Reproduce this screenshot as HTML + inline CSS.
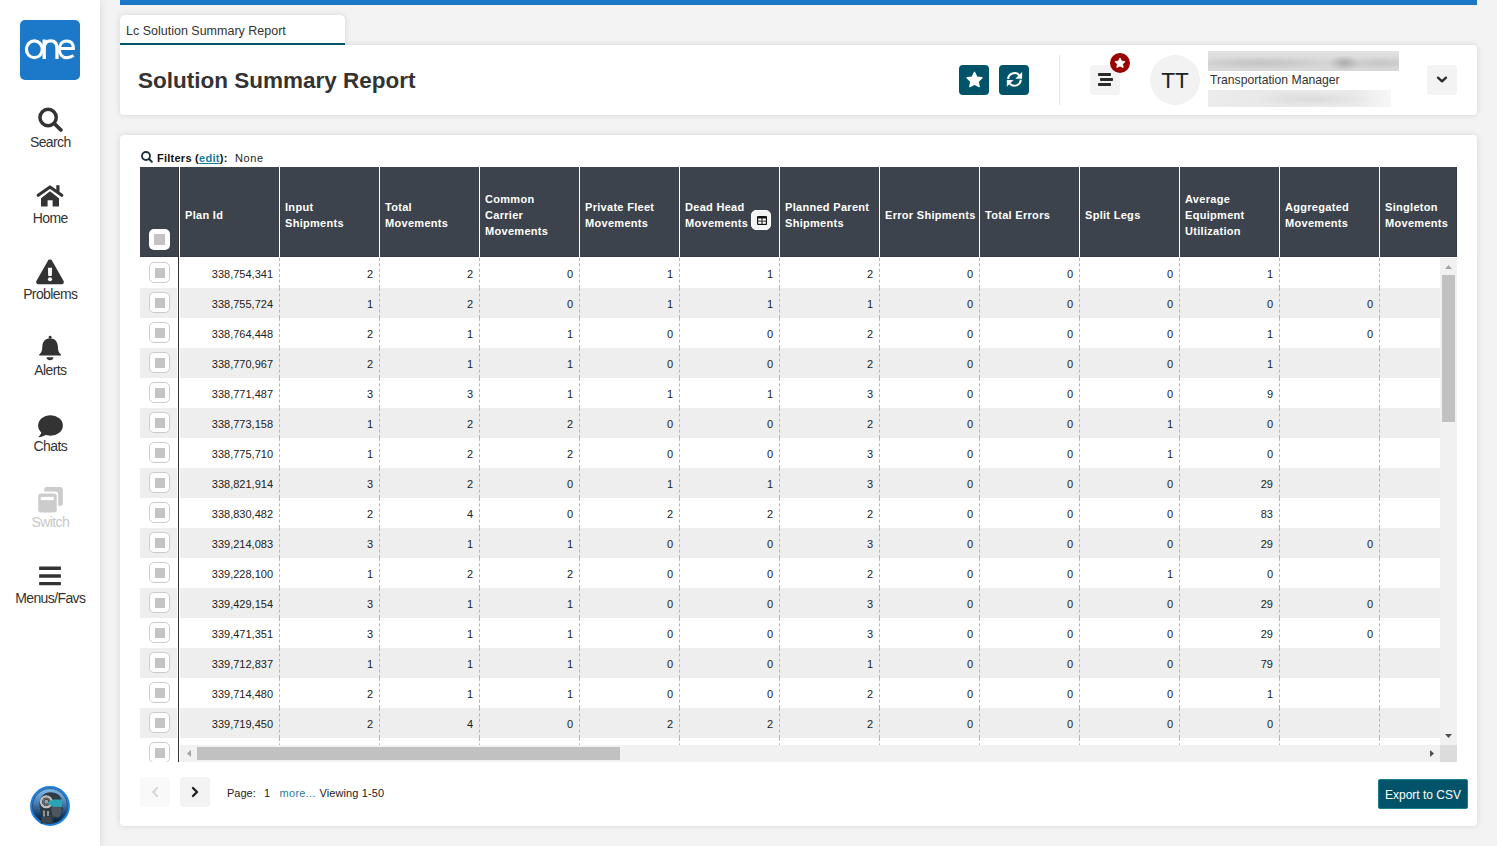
<!DOCTYPE html><html><head><meta charset="utf-8"><style>
*{box-sizing:border-box;margin:0;padding:0}
html,body{width:1497px;height:846px;overflow:hidden;background:#f3f3f3;font-family:"Liberation Sans",sans-serif;color:#222}
.abs{position:absolute}
#side{position:absolute;left:0;top:0;width:100px;height:846px;background:#fff;box-shadow:0 0 8px rgba(0,0,0,.13)}
.logo{position:absolute;left:20px;top:20px;width:60px;height:60px;background:#1c78c8;border-radius:5px;overflow:hidden}
.logo span{position:absolute;left:0;top:7px;width:60px;text-align:center;color:#fff;font-size:37px;line-height:40px;letter-spacing:-4px;text-indent:-4px}
.nav{position:absolute;left:0;width:100px;text-align:center;font-size:13.5px;color:#333}
.nav svg{position:absolute}
.nav .lbl{position:absolute;left:0;width:100px;text-align:center;line-height:16px}
#bluebar{position:absolute;left:120px;top:0;width:1357px;height:5px;background:#1b78c8}
#tab{position:absolute;left:120px;top:15px;width:225px;height:30px;background:#fff;border-radius:5px 5px 0 0;border-bottom:2px solid #005368;box-shadow:0 0 6px rgba(0,0,0,.13);clip-path:inset(-10px -10px 0 -10px)}
#tab span{position:absolute;left:6px;top:8px;font-size:12.5px;color:#333;line-height:16px;white-space:nowrap}
#hdr{position:absolute;left:120px;top:45px;width:1357px;height:70px;background:#fff;border-radius:0 4px 4px 4px;box-shadow:0 0 6px rgba(0,0,0,.13)}
#main{position:absolute;left:120px;top:135px;width:1357px;height:691px;background:#fff;border-radius:4px;box-shadow:0 0 6px rgba(0,0,0,.13)}
.title{position:absolute;left:138px;top:68px;font-size:22.5px;font-weight:bold;color:#333;white-space:nowrap;line-height:26px}
.tbtn{position:absolute;top:65px;width:30px;height:30px;border-radius:4px;background:#005368}
.gbtn{position:absolute;width:30px;height:30px;border-radius:4px;background:#f3f3f3}
#thead{position:absolute;left:140px;top:167px;width:1317px;height:90px;background:#3d434c;overflow:hidden}
.th{position:absolute;top:0;height:90px;color:#fff;font-weight:bold;font-size:11px;line-height:16px;display:flex;align-items:center;padding-left:5px;padding-top:6px;letter-spacing:.3px;border-left:1px solid #fff}
.cell{position:absolute;height:30px;line-height:32px;font-size:11px;color:#222;text-align:right;padding-right:6px;border-right:1px dashed #b5b5b5}
.row{position:absolute;left:180px;width:1260px;height:30px}
.cb{position:absolute;width:21px;height:21px;border:1px solid #ccc;border-radius:5px;background:#fff}
.cb::after{content:"";position:absolute;left:4.5px;top:4.5px;width:10.5px;height:10.5px;background:#c4c4c4}
</style></head><body>
<div id="side">
<div class="logo"><svg class="abs" style="left:0;top:0" width="60" height="60" viewBox="0 0 60 60"><ellipse cx="14.35" cy="29.3" rx="7.95" ry="8.4" fill="none" stroke="#fff" stroke-width="3.2"/><path d="M24.2 19.6 V38.9 M24.2 28.5 C24.2 23.2 27 20.9 30.6 20.9 C34.6 20.9 37 23.2 37 28.5 V38.9" fill="none" stroke="#fff" stroke-width="3.3"/><path d="M39.6 28.6 H53.4 C53.4 23.8 51 20.9 46.6 20.9 C42.1 20.9 39.4 24.5 39.4 29.3 C39.4 34.5 42.3 37.7 46.8 37.7 C49.6 37.7 51.6 37 53.6 35.6" fill="none" stroke="#fff" stroke-width="3"/></svg></div>
<svg class="abs" style="left:0;top:0" width="100" height="620" viewBox="0 0 100 620">
<circle cx="48.1" cy="117.5" r="8.15" fill="none" stroke="#333" stroke-width="3.5"/>
<line x1="54.8" y1="124" x2="60.9" y2="130" stroke="#333" stroke-width="3.8" stroke-linecap="round"/>
<polyline points="38.2,195.3 50,186.9 61.8,195.3" fill="none" stroke="#333" stroke-width="3.1" stroke-linecap="round" stroke-linejoin="round"/>
<rect x="56.3" y="185.2" width="3.2" height="7" fill="#333"/>
<path d="M41 198.2 L50 191.2 L59 198.2 V206.6 H52.6 V200.2 H47.6 V206.6 H41 Z" fill="#333"/>
<path d="M50 259.6 C51 259.6 51.7 260.1 52.2 260.9 L63.6 281 C64.3 282.4 63.5 284.2 61.8 284.2 H38.2 C36.5 284.2 35.7 282.4 36.4 281 L47.8 260.9 C48.3 260.1 49 259.6 50 259.6 Z" fill="#333"/>
<path d="M47.9 267.7 H52.1 L51.8 275.9 H48.2 Z" fill="#fff"/>
<circle cx="50" cy="279.2" r="2.05" fill="#fff"/>
<circle cx="50.1" cy="337.2" r="1.4" fill="#333"/>
<path d="M50.1 338.2 C54.8 338.2 57.6 341.8 57.8 346 L58.2 350 C58.5 352.2 60 353.6 61 354.5 V355.6 H39.2 V354.5 C40.2 353.6 41.7 352.2 42 350 L42.4 346 C42.6 341.8 45.4 338.2 50.1 338.2 Z" fill="#333"/>
<path d="M46.5 357.2 H53.5 C53.3 359 52 360.3 50 360.3 C48 360.3 46.7 359 46.5 357.2 Z" fill="#333"/>
<ellipse cx="50.5" cy="425.5" rx="12.35" ry="10.2" fill="#333"/>
<path d="M41.5 430 C42 432.5 40.5 435 38.2 437.2 C41.5 437 44.5 435.8 47 434.2 Z" fill="#333"/>
<path d="M46.7 487 H60.4 A2.5 2.5 0 0 1 62.9 489.5 V503.2 A2.5 2.5 0 0 1 60.4 505.7 H58.2 V494.5 A3 3 0 0 0 55.2 491.6 H44.2 V489.5 A2.5 2.5 0 0 1 46.7 487 Z" fill="#ccc"/>
<rect x="38.2" y="493.6" width="18.5" height="18.8" rx="2.6" fill="#ccc"/>
<rect x="40.8" y="496.9" width="12.9" height="3.2" fill="#fff"/>
<rect x="39.1" y="566.6" width="21.8" height="3.4" rx=".5" fill="#333"/>
<rect x="39.1" y="574.3" width="21.8" height="3.4" rx=".5" fill="#333"/>
<rect x="39.1" y="581.9" width="21.8" height="3.4" rx=".5" fill="#333"/>
</svg>
<div class="abs" style="left:0;top:134px;width:100px;text-align:center;font-size:14px;letter-spacing:-.6px;text-indent:.6px;color:#333;line-height:16px">Search</div>
<div class="abs" style="left:0;top:210px;width:100px;text-align:center;font-size:14px;letter-spacing:-.6px;text-indent:.6px;color:#333;line-height:16px">Home</div>
<div class="abs" style="left:0;top:286px;width:100px;text-align:center;font-size:14px;letter-spacing:-.6px;text-indent:.6px;color:#333;line-height:16px">Problems</div>
<div class="abs" style="left:0;top:362px;width:100px;text-align:center;font-size:14px;letter-spacing:-.6px;text-indent:.6px;color:#333;line-height:16px">Alerts</div>
<div class="abs" style="left:0;top:438px;width:100px;text-align:center;font-size:14px;letter-spacing:-.6px;text-indent:.6px;color:#333;line-height:16px">Chats</div>
<div class="abs" style="left:0;top:514px;width:100px;text-align:center;font-size:14px;letter-spacing:-.6px;text-indent:.6px;color:#c8c8c8;line-height:16px">Switch</div>
<div class="abs" style="left:0;top:590px;width:100px;text-align:center;font-size:14px;letter-spacing:-.6px;text-indent:.6px;color:#333;line-height:16px">Menus/Favs</div>
<svg class="abs" style="left:30px;top:786px" width="40" height="40" viewBox="0 0 40 40"><defs><linearGradient id="ag" x1="0" y1="0" x2="0" y2="1"><stop offset="0" stop-color="#8cc0ee"/><stop offset=".4" stop-color="#4a83bb"/><stop offset=".75" stop-color="#123a63"/><stop offset="1" stop-color="#03142a"/></linearGradient></defs>
<circle cx="20" cy="20" r="18.8" fill="url(#ag)" stroke="#1c7fdc" stroke-width="2.2"/>
<circle cx="20" cy="20" r="17.4" fill="none" stroke="#27496d" stroke-width=".8"/>
<path d="M10 22 C8 15 11.5 6.5 20 6.3 C27.5 6.2 31.5 10.5 32 15 L32.4 20.5 L33.5 23.5 L31.8 24.3 C31.5 28 30.5 31.5 28.5 31.8 L24 31.5 L23 37.5 L10.5 37.5 L12 30 C10.5 27.5 10.3 24.5 10 22 Z" fill="#2f3b44"/>
<path d="M21 20.5 L31.5 21 C31.8 25 31 30.8 28.3 31.3 L22.5 30.5 Z" fill="#4b565e"/>
<circle cx="16.3" cy="15.8" r="5.4" fill="none" stroke="#b9bfc4" stroke-width="2.2"/>
<circle cx="16.3" cy="15.8" r="3.3" fill="none" stroke="#9c8a62" stroke-width=".8"/>
<circle cx="16.3" cy="15.8" r="2" fill="#9aa3aa"/>
<path d="M17 17 L23 13.6 H32.3 V21 L23 20.8 Z" fill="#2aa5b6"/>
<path d="M13 24.5 H15 V30.5 H13 Z M17 25 H19 V30 H17 Z" fill="#8e969c"/>
<path d="M11.5 31 H21 V36.5 H11.5 Z" fill="#3d474e"/>
</svg>
</div>
<div id="bluebar"></div>
<div id="hdr"></div>
<div id="tab"><span>Lc Solution Summary Report</span></div>
<div id="main"></div>
<div class="title">Solution Summary Report</div>
<div class="tbtn" style="left:959px"><svg class="abs" style="left:0;top:0" width="30" height="30" viewBox="0 0 30 30"><path d="M15.50,7.30 L17.79,12.04 L23.01,12.76 L19.21,16.41 L20.14,21.59 L15.50,19.10 L10.86,21.59 L11.79,16.41 L7.99,12.76 L13.21,12.04 Z" fill="#fff" stroke="#fff" stroke-width="1.3" stroke-linejoin="round"/></svg></div>
<div class="tbtn" style="left:999px"><svg class="abs" style="left:0;top:0" width="30" height="30" viewBox="0 0 30 30"><g transform="translate(7.8,6.8)"><path d="M1.3 7.2 A6.3 6.3 0 0 1 12.3 3.4" fill="none" stroke="#fff" stroke-width="2.1"/><path d="M15.3 0.2 V7 H8.5 Z" fill="#fff"/><g transform="rotate(180 7.65 7.6)"><path d="M1.3 7.2 A6.3 6.3 0 0 1 12.3 3.4" fill="none" stroke="#fff" stroke-width="2.1"/><path d="M15.3 0.2 V7 H8.5 Z" fill="#fff"/></g></g></svg></div>
<div class="abs" style="left:1059px;top:55px;width:1px;height:50px;background:#e6e6e6"></div>
<div class="gbtn" style="left:1090px;top:65px"><svg class="abs" style="left:0;top:0" width="30" height="30" viewBox="0 0 30 30"><rect x="8" y="8" width="13" height="3" rx=".8" fill="#2a2a2a"/><rect x="10" y="13" width="13" height="3" rx=".8" fill="#2a2a2a"/><rect x="8" y="18" width="13" height="3" rx=".8" fill="#2a2a2a"/></svg></div>
<div class="abs" style="left:1110px;top:53px;width:20px;height:20px;border-radius:50%;background:#990000"><svg class="abs" style="left:4px;top:4px" width="12" height="12" viewBox="0 0 16 16"><path d="M8 1.2 L10.1 5.5 L14.8 6.1 L11.4 9.4 L12.2 14.1 L8 11.9 L3.8 14.1 L4.6 9.4 L1.2 6.1 L5.9 5.5 Z" fill="#fff" stroke="#fff" stroke-width="1.2" stroke-linejoin="round"/></svg></div>
<div class="abs" style="left:1150px;top:55px;width:50px;height:50px;border-radius:50%;background:#f2f2f2;text-align:center;line-height:51.5px;font-size:22.5px;color:#222">TT</div>
<div class="abs" style="left:1208px;top:51px;width:191px;height:20px;background:radial-gradient(ellipse 16px 8px at 136px 12px,rgba(140,140,140,.55),rgba(140,140,140,0)),radial-gradient(ellipse 70px 7px at 55px 12px,rgba(160,160,160,.35),rgba(160,160,160,0)),radial-gradient(ellipse 40px 7px at 172px 12px,rgba(160,160,160,.3),rgba(160,160,160,0)),linear-gradient(180deg,#e2e2e2 0%,#d6d6d6 60%,#d9d9d9 100%)"></div>
<div class="abs" style="left:1210px;top:72px;font-size:12.2px;line-height:16px;color:#333;white-space:nowrap">Transportation Manager</div>
<div class="abs" style="left:1208px;top:90px;width:183px;height:17px;background:radial-gradient(ellipse 60px 7px at 105px 9px,rgba(200,200,200,.4),rgba(200,200,200,0)),linear-gradient(90deg,#ececec 0%,#e7e7e7 45%,#eaeaea 80%,#f7f7f7 100%)"></div>
<div class="gbtn" style="left:1427px;top:65px"><svg class="abs" style="left:0;top:0" width="30" height="30" viewBox="0 0 30 30"><path d="M11 12.6 L15 16.4 L19 12.6" fill="none" stroke="#2a2a2a" stroke-width="2.3" stroke-linecap="round" stroke-linejoin="round"/></svg></div>
<svg class="abs" style="left:141px;top:151px" width="13" height="13" viewBox="0 0 13 13"><circle cx="5" cy="5" r="4" fill="none" stroke="#22313f" stroke-width="1.9"/><line x1="8" y1="8" x2="10.8" y2="10.8" stroke="#22313f" stroke-width="2" stroke-linecap="round"/></svg>
<div class="abs" style="left:157px;top:151px;font-size:11px;line-height:15px;color:#111;white-space:nowrap;letter-spacing:.25px"><b>Filters (<span style="color:#1a7c9e;text-decoration:underline;letter-spacing:.3px">edit</span>):</b></div>
<div class="abs" style="left:235px;top:151px;font-size:11px;line-height:15px;color:#222;white-space:nowrap;letter-spacing:.6px">None</div>
<div id="thead"><div class="abs" style="left:0;top:89px;width:1317px;height:1px;background:#343a43"></div><div class="abs" style="left:1316px;top:0;width:1px;height:90px;background:#343a43"></div>
<div class="th" style="left:39px;width:100px">Plan Id</div>
<div class="th" style="left:139px;width:100px">Input<br>Shipments</div>
<div class="th" style="left:239px;width:100px">Total<br>Movements</div>
<div class="th" style="left:339px;width:100px">Common<br>Carrier<br>Movements</div>
<div class="th" style="left:439px;width:100px">Private Fleet<br>Movements</div>
<div class="th" style="left:539px;width:100px">Dead Head<br>Movements<div class="abs" style="left:71px;top:43px;width:20px;height:20px;border-radius:5px;background:#f3f3f3;border:1px solid #fff"><svg class="abs" style="left:4.5px;top:5px" width="10" height="9" viewBox="0 0 10 9"><rect x="0" y="0" width="10" height="9" rx="1" fill="#111"/><rect x="1.2" y="2.5" width="3.3" height="2.2" fill="#fff"/><rect x="5.5" y="2.5" width="3.3" height="2.2" fill="#fff"/><rect x="1.2" y="5.6" width="3.3" height="2.2" fill="#fff"/><rect x="5.5" y="5.6" width="3.3" height="2.2" fill="#fff"/></svg></div></div>
<div class="th" style="left:639px;width:100px">Planned Parent<br>Shipments</div>
<div class="th" style="left:739px;width:100px">Error Shipments</div>
<div class="th" style="left:839px;width:100px">Total Errors</div>
<div class="th" style="left:939px;width:100px">Split Legs</div>
<div class="th" style="left:1039px;width:100px">Average<br>Equipment<br>Utilization</div>
<div class="th" style="left:1139px;width:100px">Aggregated<br>Movements</div>
<div class="th" style="left:1239px;width:100px">Singleton<br>Movements</div>
</div>
<div class="abs" style="left:149px;top:229px;width:21px;height:21px;border-radius:5px;background:#fff"><div class="abs" style="left:5px;top:5px;width:11px;height:11px;background:#c4c4c4"></div></div>
<div class="abs" style="left:140px;top:257px;width:1300px;height:488px;overflow:hidden">
<div class="abs" style="left:0;top:1px;width:37px;height:30px;background:#fff"></div>
<div class="abs" style="left:40px;top:1px;width:1260px;height:30px;background:#fff"></div>
<div class="cell" style="left:40px;top:1px;width:100px">338,754,341</div>
<div class="cell" style="left:140px;top:1px;width:100px">2</div>
<div class="cell" style="left:240px;top:1px;width:100px">2</div>
<div class="cell" style="left:340px;top:1px;width:100px">0</div>
<div class="cell" style="left:440px;top:1px;width:100px">1</div>
<div class="cell" style="left:540px;top:1px;width:100px">1</div>
<div class="cell" style="left:640px;top:1px;width:100px">2</div>
<div class="cell" style="left:740px;top:1px;width:100px">0</div>
<div class="cell" style="left:840px;top:1px;width:100px">0</div>
<div class="cell" style="left:940px;top:1px;width:100px">0</div>
<div class="cell" style="left:1040px;top:1px;width:100px">1</div>
<div class="cell" style="left:1140px;top:1px;width:100px"></div>
<div class="cell" style="left:1240px;top:1px;width:100px"></div>
<div class="abs" style="left:0;top:31px;width:37px;height:30px;background:#eeeeee"></div>
<div class="abs" style="left:40px;top:31px;width:1260px;height:30px;background:#eeeeee"></div>
<div class="cell" style="left:40px;top:31px;width:100px">338,755,724</div>
<div class="cell" style="left:140px;top:31px;width:100px">1</div>
<div class="cell" style="left:240px;top:31px;width:100px">2</div>
<div class="cell" style="left:340px;top:31px;width:100px">0</div>
<div class="cell" style="left:440px;top:31px;width:100px">1</div>
<div class="cell" style="left:540px;top:31px;width:100px">1</div>
<div class="cell" style="left:640px;top:31px;width:100px">1</div>
<div class="cell" style="left:740px;top:31px;width:100px">0</div>
<div class="cell" style="left:840px;top:31px;width:100px">0</div>
<div class="cell" style="left:940px;top:31px;width:100px">0</div>
<div class="cell" style="left:1040px;top:31px;width:100px">0</div>
<div class="cell" style="left:1140px;top:31px;width:100px">0</div>
<div class="cell" style="left:1240px;top:31px;width:100px"></div>
<div class="abs" style="left:0;top:61px;width:37px;height:30px;background:#fff"></div>
<div class="abs" style="left:40px;top:61px;width:1260px;height:30px;background:#fff"></div>
<div class="cell" style="left:40px;top:61px;width:100px">338,764,448</div>
<div class="cell" style="left:140px;top:61px;width:100px">2</div>
<div class="cell" style="left:240px;top:61px;width:100px">1</div>
<div class="cell" style="left:340px;top:61px;width:100px">1</div>
<div class="cell" style="left:440px;top:61px;width:100px">0</div>
<div class="cell" style="left:540px;top:61px;width:100px">0</div>
<div class="cell" style="left:640px;top:61px;width:100px">2</div>
<div class="cell" style="left:740px;top:61px;width:100px">0</div>
<div class="cell" style="left:840px;top:61px;width:100px">0</div>
<div class="cell" style="left:940px;top:61px;width:100px">0</div>
<div class="cell" style="left:1040px;top:61px;width:100px">1</div>
<div class="cell" style="left:1140px;top:61px;width:100px">0</div>
<div class="cell" style="left:1240px;top:61px;width:100px"></div>
<div class="abs" style="left:0;top:91px;width:37px;height:30px;background:#eeeeee"></div>
<div class="abs" style="left:40px;top:91px;width:1260px;height:30px;background:#eeeeee"></div>
<div class="cell" style="left:40px;top:91px;width:100px">338,770,967</div>
<div class="cell" style="left:140px;top:91px;width:100px">2</div>
<div class="cell" style="left:240px;top:91px;width:100px">1</div>
<div class="cell" style="left:340px;top:91px;width:100px">1</div>
<div class="cell" style="left:440px;top:91px;width:100px">0</div>
<div class="cell" style="left:540px;top:91px;width:100px">0</div>
<div class="cell" style="left:640px;top:91px;width:100px">2</div>
<div class="cell" style="left:740px;top:91px;width:100px">0</div>
<div class="cell" style="left:840px;top:91px;width:100px">0</div>
<div class="cell" style="left:940px;top:91px;width:100px">0</div>
<div class="cell" style="left:1040px;top:91px;width:100px">1</div>
<div class="cell" style="left:1140px;top:91px;width:100px"></div>
<div class="cell" style="left:1240px;top:91px;width:100px"></div>
<div class="abs" style="left:0;top:121px;width:37px;height:30px;background:#fff"></div>
<div class="abs" style="left:40px;top:121px;width:1260px;height:30px;background:#fff"></div>
<div class="cell" style="left:40px;top:121px;width:100px">338,771,487</div>
<div class="cell" style="left:140px;top:121px;width:100px">3</div>
<div class="cell" style="left:240px;top:121px;width:100px">3</div>
<div class="cell" style="left:340px;top:121px;width:100px">1</div>
<div class="cell" style="left:440px;top:121px;width:100px">1</div>
<div class="cell" style="left:540px;top:121px;width:100px">1</div>
<div class="cell" style="left:640px;top:121px;width:100px">3</div>
<div class="cell" style="left:740px;top:121px;width:100px">0</div>
<div class="cell" style="left:840px;top:121px;width:100px">0</div>
<div class="cell" style="left:940px;top:121px;width:100px">0</div>
<div class="cell" style="left:1040px;top:121px;width:100px">9</div>
<div class="cell" style="left:1140px;top:121px;width:100px"></div>
<div class="cell" style="left:1240px;top:121px;width:100px"></div>
<div class="abs" style="left:0;top:151px;width:37px;height:30px;background:#eeeeee"></div>
<div class="abs" style="left:40px;top:151px;width:1260px;height:30px;background:#eeeeee"></div>
<div class="cell" style="left:40px;top:151px;width:100px">338,773,158</div>
<div class="cell" style="left:140px;top:151px;width:100px">1</div>
<div class="cell" style="left:240px;top:151px;width:100px">2</div>
<div class="cell" style="left:340px;top:151px;width:100px">2</div>
<div class="cell" style="left:440px;top:151px;width:100px">0</div>
<div class="cell" style="left:540px;top:151px;width:100px">0</div>
<div class="cell" style="left:640px;top:151px;width:100px">2</div>
<div class="cell" style="left:740px;top:151px;width:100px">0</div>
<div class="cell" style="left:840px;top:151px;width:100px">0</div>
<div class="cell" style="left:940px;top:151px;width:100px">1</div>
<div class="cell" style="left:1040px;top:151px;width:100px">0</div>
<div class="cell" style="left:1140px;top:151px;width:100px"></div>
<div class="cell" style="left:1240px;top:151px;width:100px"></div>
<div class="abs" style="left:0;top:181px;width:37px;height:30px;background:#fff"></div>
<div class="abs" style="left:40px;top:181px;width:1260px;height:30px;background:#fff"></div>
<div class="cell" style="left:40px;top:181px;width:100px">338,775,710</div>
<div class="cell" style="left:140px;top:181px;width:100px">1</div>
<div class="cell" style="left:240px;top:181px;width:100px">2</div>
<div class="cell" style="left:340px;top:181px;width:100px">2</div>
<div class="cell" style="left:440px;top:181px;width:100px">0</div>
<div class="cell" style="left:540px;top:181px;width:100px">0</div>
<div class="cell" style="left:640px;top:181px;width:100px">3</div>
<div class="cell" style="left:740px;top:181px;width:100px">0</div>
<div class="cell" style="left:840px;top:181px;width:100px">0</div>
<div class="cell" style="left:940px;top:181px;width:100px">1</div>
<div class="cell" style="left:1040px;top:181px;width:100px">0</div>
<div class="cell" style="left:1140px;top:181px;width:100px"></div>
<div class="cell" style="left:1240px;top:181px;width:100px"></div>
<div class="abs" style="left:0;top:211px;width:37px;height:30px;background:#eeeeee"></div>
<div class="abs" style="left:40px;top:211px;width:1260px;height:30px;background:#eeeeee"></div>
<div class="cell" style="left:40px;top:211px;width:100px">338,821,914</div>
<div class="cell" style="left:140px;top:211px;width:100px">3</div>
<div class="cell" style="left:240px;top:211px;width:100px">2</div>
<div class="cell" style="left:340px;top:211px;width:100px">0</div>
<div class="cell" style="left:440px;top:211px;width:100px">1</div>
<div class="cell" style="left:540px;top:211px;width:100px">1</div>
<div class="cell" style="left:640px;top:211px;width:100px">3</div>
<div class="cell" style="left:740px;top:211px;width:100px">0</div>
<div class="cell" style="left:840px;top:211px;width:100px">0</div>
<div class="cell" style="left:940px;top:211px;width:100px">0</div>
<div class="cell" style="left:1040px;top:211px;width:100px">29</div>
<div class="cell" style="left:1140px;top:211px;width:100px"></div>
<div class="cell" style="left:1240px;top:211px;width:100px"></div>
<div class="abs" style="left:0;top:241px;width:37px;height:30px;background:#fff"></div>
<div class="abs" style="left:40px;top:241px;width:1260px;height:30px;background:#fff"></div>
<div class="cell" style="left:40px;top:241px;width:100px">338,830,482</div>
<div class="cell" style="left:140px;top:241px;width:100px">2</div>
<div class="cell" style="left:240px;top:241px;width:100px">4</div>
<div class="cell" style="left:340px;top:241px;width:100px">0</div>
<div class="cell" style="left:440px;top:241px;width:100px">2</div>
<div class="cell" style="left:540px;top:241px;width:100px">2</div>
<div class="cell" style="left:640px;top:241px;width:100px">2</div>
<div class="cell" style="left:740px;top:241px;width:100px">0</div>
<div class="cell" style="left:840px;top:241px;width:100px">0</div>
<div class="cell" style="left:940px;top:241px;width:100px">0</div>
<div class="cell" style="left:1040px;top:241px;width:100px">83</div>
<div class="cell" style="left:1140px;top:241px;width:100px"></div>
<div class="cell" style="left:1240px;top:241px;width:100px"></div>
<div class="abs" style="left:0;top:271px;width:37px;height:30px;background:#eeeeee"></div>
<div class="abs" style="left:40px;top:271px;width:1260px;height:30px;background:#eeeeee"></div>
<div class="cell" style="left:40px;top:271px;width:100px">339,214,083</div>
<div class="cell" style="left:140px;top:271px;width:100px">3</div>
<div class="cell" style="left:240px;top:271px;width:100px">1</div>
<div class="cell" style="left:340px;top:271px;width:100px">1</div>
<div class="cell" style="left:440px;top:271px;width:100px">0</div>
<div class="cell" style="left:540px;top:271px;width:100px">0</div>
<div class="cell" style="left:640px;top:271px;width:100px">3</div>
<div class="cell" style="left:740px;top:271px;width:100px">0</div>
<div class="cell" style="left:840px;top:271px;width:100px">0</div>
<div class="cell" style="left:940px;top:271px;width:100px">0</div>
<div class="cell" style="left:1040px;top:271px;width:100px">29</div>
<div class="cell" style="left:1140px;top:271px;width:100px">0</div>
<div class="cell" style="left:1240px;top:271px;width:100px"></div>
<div class="abs" style="left:0;top:301px;width:37px;height:30px;background:#fff"></div>
<div class="abs" style="left:40px;top:301px;width:1260px;height:30px;background:#fff"></div>
<div class="cell" style="left:40px;top:301px;width:100px">339,228,100</div>
<div class="cell" style="left:140px;top:301px;width:100px">1</div>
<div class="cell" style="left:240px;top:301px;width:100px">2</div>
<div class="cell" style="left:340px;top:301px;width:100px">2</div>
<div class="cell" style="left:440px;top:301px;width:100px">0</div>
<div class="cell" style="left:540px;top:301px;width:100px">0</div>
<div class="cell" style="left:640px;top:301px;width:100px">2</div>
<div class="cell" style="left:740px;top:301px;width:100px">0</div>
<div class="cell" style="left:840px;top:301px;width:100px">0</div>
<div class="cell" style="left:940px;top:301px;width:100px">1</div>
<div class="cell" style="left:1040px;top:301px;width:100px">0</div>
<div class="cell" style="left:1140px;top:301px;width:100px"></div>
<div class="cell" style="left:1240px;top:301px;width:100px"></div>
<div class="abs" style="left:0;top:331px;width:37px;height:30px;background:#eeeeee"></div>
<div class="abs" style="left:40px;top:331px;width:1260px;height:30px;background:#eeeeee"></div>
<div class="cell" style="left:40px;top:331px;width:100px">339,429,154</div>
<div class="cell" style="left:140px;top:331px;width:100px">3</div>
<div class="cell" style="left:240px;top:331px;width:100px">1</div>
<div class="cell" style="left:340px;top:331px;width:100px">1</div>
<div class="cell" style="left:440px;top:331px;width:100px">0</div>
<div class="cell" style="left:540px;top:331px;width:100px">0</div>
<div class="cell" style="left:640px;top:331px;width:100px">3</div>
<div class="cell" style="left:740px;top:331px;width:100px">0</div>
<div class="cell" style="left:840px;top:331px;width:100px">0</div>
<div class="cell" style="left:940px;top:331px;width:100px">0</div>
<div class="cell" style="left:1040px;top:331px;width:100px">29</div>
<div class="cell" style="left:1140px;top:331px;width:100px">0</div>
<div class="cell" style="left:1240px;top:331px;width:100px"></div>
<div class="abs" style="left:0;top:361px;width:37px;height:30px;background:#fff"></div>
<div class="abs" style="left:40px;top:361px;width:1260px;height:30px;background:#fff"></div>
<div class="cell" style="left:40px;top:361px;width:100px">339,471,351</div>
<div class="cell" style="left:140px;top:361px;width:100px">3</div>
<div class="cell" style="left:240px;top:361px;width:100px">1</div>
<div class="cell" style="left:340px;top:361px;width:100px">1</div>
<div class="cell" style="left:440px;top:361px;width:100px">0</div>
<div class="cell" style="left:540px;top:361px;width:100px">0</div>
<div class="cell" style="left:640px;top:361px;width:100px">3</div>
<div class="cell" style="left:740px;top:361px;width:100px">0</div>
<div class="cell" style="left:840px;top:361px;width:100px">0</div>
<div class="cell" style="left:940px;top:361px;width:100px">0</div>
<div class="cell" style="left:1040px;top:361px;width:100px">29</div>
<div class="cell" style="left:1140px;top:361px;width:100px">0</div>
<div class="cell" style="left:1240px;top:361px;width:100px"></div>
<div class="abs" style="left:0;top:391px;width:37px;height:30px;background:#eeeeee"></div>
<div class="abs" style="left:40px;top:391px;width:1260px;height:30px;background:#eeeeee"></div>
<div class="cell" style="left:40px;top:391px;width:100px">339,712,837</div>
<div class="cell" style="left:140px;top:391px;width:100px">1</div>
<div class="cell" style="left:240px;top:391px;width:100px">1</div>
<div class="cell" style="left:340px;top:391px;width:100px">1</div>
<div class="cell" style="left:440px;top:391px;width:100px">0</div>
<div class="cell" style="left:540px;top:391px;width:100px">0</div>
<div class="cell" style="left:640px;top:391px;width:100px">1</div>
<div class="cell" style="left:740px;top:391px;width:100px">0</div>
<div class="cell" style="left:840px;top:391px;width:100px">0</div>
<div class="cell" style="left:940px;top:391px;width:100px">0</div>
<div class="cell" style="left:1040px;top:391px;width:100px">79</div>
<div class="cell" style="left:1140px;top:391px;width:100px"></div>
<div class="cell" style="left:1240px;top:391px;width:100px"></div>
<div class="abs" style="left:0;top:421px;width:37px;height:30px;background:#fff"></div>
<div class="abs" style="left:40px;top:421px;width:1260px;height:30px;background:#fff"></div>
<div class="cell" style="left:40px;top:421px;width:100px">339,714,480</div>
<div class="cell" style="left:140px;top:421px;width:100px">2</div>
<div class="cell" style="left:240px;top:421px;width:100px">1</div>
<div class="cell" style="left:340px;top:421px;width:100px">1</div>
<div class="cell" style="left:440px;top:421px;width:100px">0</div>
<div class="cell" style="left:540px;top:421px;width:100px">0</div>
<div class="cell" style="left:640px;top:421px;width:100px">2</div>
<div class="cell" style="left:740px;top:421px;width:100px">0</div>
<div class="cell" style="left:840px;top:421px;width:100px">0</div>
<div class="cell" style="left:940px;top:421px;width:100px">0</div>
<div class="cell" style="left:1040px;top:421px;width:100px">1</div>
<div class="cell" style="left:1140px;top:421px;width:100px"></div>
<div class="cell" style="left:1240px;top:421px;width:100px"></div>
<div class="abs" style="left:0;top:451px;width:37px;height:30px;background:#eeeeee"></div>
<div class="abs" style="left:40px;top:451px;width:1260px;height:30px;background:#eeeeee"></div>
<div class="cell" style="left:40px;top:451px;width:100px">339,719,450</div>
<div class="cell" style="left:140px;top:451px;width:100px">2</div>
<div class="cell" style="left:240px;top:451px;width:100px">4</div>
<div class="cell" style="left:340px;top:451px;width:100px">0</div>
<div class="cell" style="left:440px;top:451px;width:100px">2</div>
<div class="cell" style="left:540px;top:451px;width:100px">2</div>
<div class="cell" style="left:640px;top:451px;width:100px">2</div>
<div class="cell" style="left:740px;top:451px;width:100px">0</div>
<div class="cell" style="left:840px;top:451px;width:100px">0</div>
<div class="cell" style="left:940px;top:451px;width:100px">0</div>
<div class="cell" style="left:1040px;top:451px;width:100px">0</div>
<div class="cell" style="left:1140px;top:451px;width:100px"></div>
<div class="cell" style="left:1240px;top:451px;width:100px"></div>
<div class="abs" style="left:0;top:481px;width:37px;height:30px;background:#fff"></div>
<div class="abs" style="left:40px;top:481px;width:1260px;height:30px;background:#fff"></div>
<div class="cell" style="left:40px;top:481px;width:100px"></div>
<div class="cell" style="left:140px;top:481px;width:100px"></div>
<div class="cell" style="left:240px;top:481px;width:100px"></div>
<div class="cell" style="left:340px;top:481px;width:100px"></div>
<div class="cell" style="left:440px;top:481px;width:100px"></div>
<div class="cell" style="left:540px;top:481px;width:100px"></div>
<div class="cell" style="left:640px;top:481px;width:100px"></div>
<div class="cell" style="left:740px;top:481px;width:100px"></div>
<div class="cell" style="left:840px;top:481px;width:100px"></div>
<div class="cell" style="left:940px;top:481px;width:100px"></div>
<div class="cell" style="left:1040px;top:481px;width:100px"></div>
<div class="cell" style="left:1140px;top:481px;width:100px"></div>
<div class="cell" style="left:1240px;top:481px;width:100px"></div>
</div>
<div class="abs" style="left:140px;top:257px;width:38px;height:505px;overflow:hidden">
<div class="abs" style="left:0;top:1px;width:37px;height:30px;background:#fff"></div>
<div class="cb" style="left:9px;top:5px"></div>
<div class="abs" style="left:0;top:31px;width:37px;height:30px;background:#eeeeee"></div>
<div class="cb" style="left:9px;top:35px"></div>
<div class="abs" style="left:0;top:61px;width:37px;height:30px;background:#fff"></div>
<div class="cb" style="left:9px;top:65px"></div>
<div class="abs" style="left:0;top:91px;width:37px;height:30px;background:#eeeeee"></div>
<div class="cb" style="left:9px;top:95px"></div>
<div class="abs" style="left:0;top:121px;width:37px;height:30px;background:#fff"></div>
<div class="cb" style="left:9px;top:125px"></div>
<div class="abs" style="left:0;top:151px;width:37px;height:30px;background:#eeeeee"></div>
<div class="cb" style="left:9px;top:155px"></div>
<div class="abs" style="left:0;top:181px;width:37px;height:30px;background:#fff"></div>
<div class="cb" style="left:9px;top:185px"></div>
<div class="abs" style="left:0;top:211px;width:37px;height:30px;background:#eeeeee"></div>
<div class="cb" style="left:9px;top:215px"></div>
<div class="abs" style="left:0;top:241px;width:37px;height:30px;background:#fff"></div>
<div class="cb" style="left:9px;top:245px"></div>
<div class="abs" style="left:0;top:271px;width:37px;height:30px;background:#eeeeee"></div>
<div class="cb" style="left:9px;top:275px"></div>
<div class="abs" style="left:0;top:301px;width:37px;height:30px;background:#fff"></div>
<div class="cb" style="left:9px;top:305px"></div>
<div class="abs" style="left:0;top:331px;width:37px;height:30px;background:#eeeeee"></div>
<div class="cb" style="left:9px;top:335px"></div>
<div class="abs" style="left:0;top:361px;width:37px;height:30px;background:#fff"></div>
<div class="cb" style="left:9px;top:365px"></div>
<div class="abs" style="left:0;top:391px;width:37px;height:30px;background:#eeeeee"></div>
<div class="cb" style="left:9px;top:395px"></div>
<div class="abs" style="left:0;top:421px;width:37px;height:30px;background:#fff"></div>
<div class="cb" style="left:9px;top:425px"></div>
<div class="abs" style="left:0;top:451px;width:37px;height:30px;background:#eeeeee"></div>
<div class="cb" style="left:9px;top:455px"></div>
<div class="abs" style="left:0;top:481px;width:37px;height:30px;background:#fff"></div>
<div class="cb" style="left:9px;top:485px"></div>
</div>
<div class="abs" style="left:178px;top:167px;width:1px;height:595px;background:#333"></div>
<div class="abs" style="left:1440px;top:258px;width:17px;height:487px;background:#f1f1f1"></div>
<div class="abs" style="left:1442px;top:275px;width:13px;height:147px;background:#c1c1c1"></div>
<svg class="abs" style="left:1440px;top:258px" width="17" height="17"><path d="M5 11 L8.5 7 L12 11 Z" fill="#a3a3a3"/></svg>
<svg class="abs" style="left:1440px;top:728px" width="17" height="17"><path d="M5 6 L8.5 10 L12 6 Z" fill="#505050"/></svg>
<div class="abs" style="left:180px;top:745px;width:1260px;height:17px;background:#f1f1f1"></div>
<div class="abs" style="left:197px;top:747px;width:423px;height:13px;background:#c1c1c1"></div>
<svg class="abs" style="left:180px;top:745px" width="17" height="17"><path d="M11 5 L7 8.5 L11 12 Z" fill="#a3a3a3"/></svg>
<svg class="abs" style="left:1424px;top:745px" width="17" height="17"><path d="M6 5 L10 8.5 L6 12 Z" fill="#505050"/></svg>
<div class="abs" style="left:1440px;top:745px;width:17px;height:17px;background:#dcdcdc"></div>
<div class="gbtn" style="left:140px;top:777px;background:#f9f9f9"><svg class="abs" style="left:0;top:0" width="30" height="30"><path d="M17 11 L13 15 L17 19" fill="none" stroke="#d8d8d8" stroke-width="2.2" stroke-linecap="round" stroke-linejoin="round"/></svg></div>
<div class="gbtn" style="left:180px;top:777px"><svg class="abs" style="left:0;top:0" width="30" height="30"><path d="M13 11 L17 15 L13 19" fill="none" stroke="#222" stroke-width="2.4" stroke-linecap="round" stroke-linejoin="round"/></svg></div>
<div class="abs" style="left:227px;top:786px;font-size:11px;line-height:15px;color:#222;white-space:nowrap">Page:</div>
<div class="abs" style="left:264px;top:786px;font-size:11px;line-height:15px;color:#222;white-space:nowrap">1</div>
<div class="abs" style="left:279.5px;top:786px;font-size:11px;line-height:15px;color:#2c7d9a;white-space:nowrap;letter-spacing:.3px">more...</div>
<div class="abs" style="left:319.5px;top:786px;font-size:11px;line-height:15px;color:#222;white-space:nowrap;letter-spacing:.1px">Viewing 1-50</div>
<div class="abs" style="left:1378px;top:779px;width:90px;height:30px;background:#005368;border:1px solid #1a7f95;border-radius:2px;color:#fff;font-size:12px;line-height:30px;text-align:center;white-space:nowrap">Export to CSV</div>
</body></html>
